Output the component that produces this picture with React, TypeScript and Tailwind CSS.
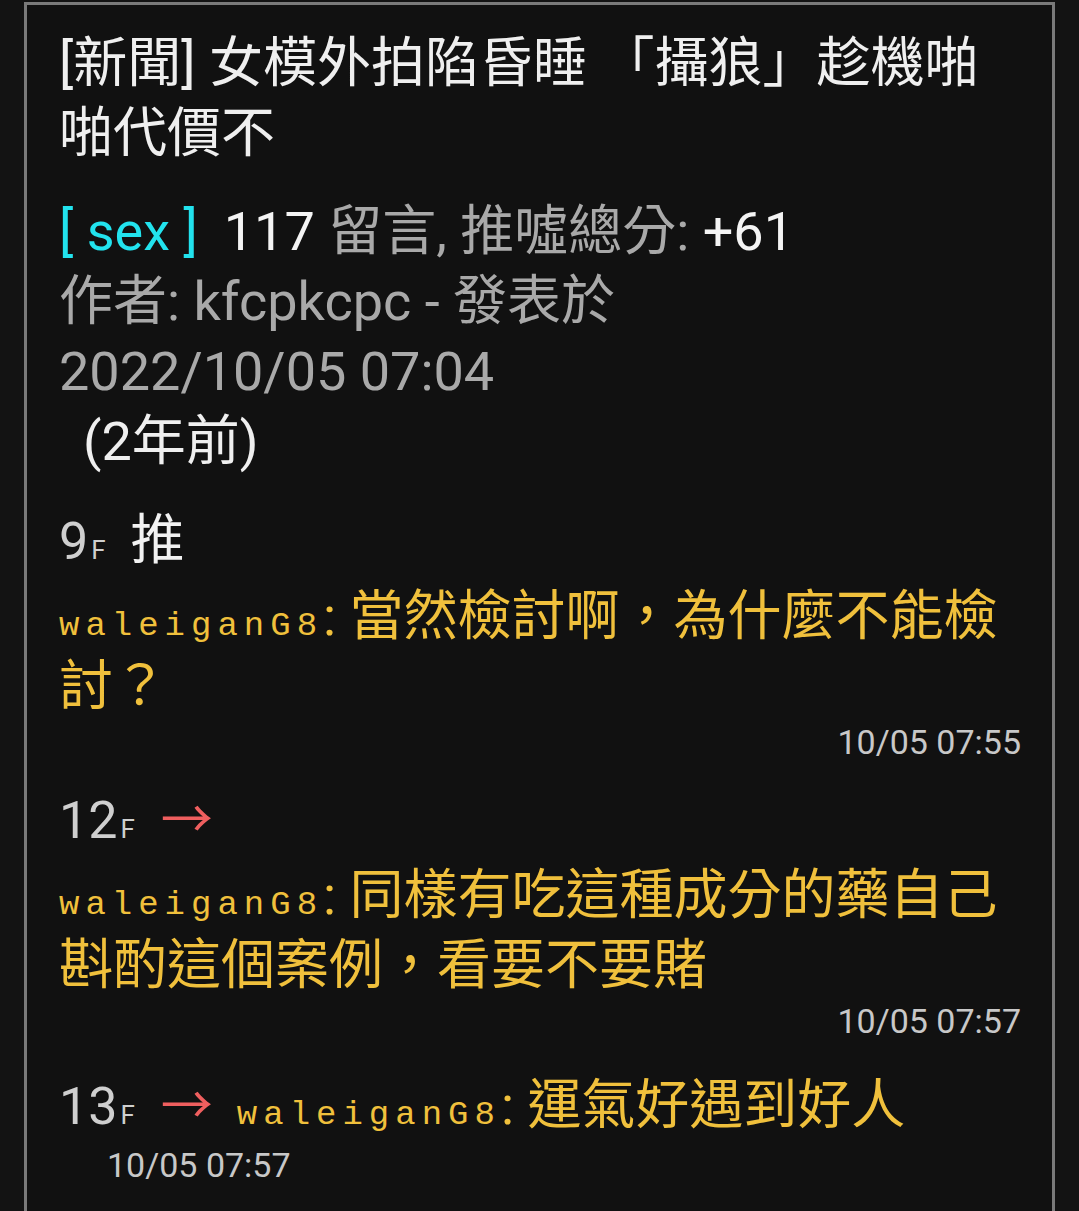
const sans = "font-['Roboto','Noto_Sans_CJK_TC',sans-serif]";
const mono = "font-['Liberation_Mono',monospace]";

type Push = { floor: number; tag: "推" | "→"; user: string; text: string; time: string; inline?: boolean };

const pushes: Push[] = [
  { floor: 9, tag: "推", user: "waleiganG8", text: "當然檢討啊，為什麼不能檢討？", time: "10/05 07:55" },
  { floor: 12, tag: "→", user: "waleiganG8", text: "同樣有吃這種成分的藥自己斟酌這個案例，看要不要賭", time: "10/05 07:57" },
  { floor: 13, tag: "→", user: "waleiganG8", text: "運氣好遇到好人", time: "10/05 07:57", inline: true },
];

function Tag({ tag }: { tag: Push["tag"] }) {
  if (tag === "推") return <span className="ml-[25px] text-[#f2f2f2]">推</span>;
  return (
    <span className="ml-[26px] font-['Noto_Sans_CJK_TC',sans-serif] text-[52px] leading-none text-[#ef5f5f]">→</span>
  );
}

function Floor({ n }: { n: number }) {
  return (
    <span className="text-[52px] text-[#cfcfcf]">
      {n}
      <span className="ml-[3px] text-[26px]">F</span>
    </span>
  );
}

function Comment({ user, text }: { user: string; text: string }) {
  return (
    <>
      <span className={`${mono} text-[34px] leading-none tracking-[6px] text-[#f0c03c]`}>{user}</span>
      <span className="text-[#f0c03c]">: {text}</span>
    </>
  );
}

function PushRow({ p }: { p: Push }) {
  if (p.inline) {
    return (
      <div className="mt-[27px]">
        <div className="leading-[70px]">
          <Floor n={p.floor} />
          <Tag tag={p.tag} />
          <span className="ml-[24px]" />
          <Comment user={p.user} text={p.text} />
        </div>
        <div className="-mt-[8px] pl-[48px] text-[34px] leading-[46px] text-[#c8c8c8]">{p.time}</div>
      </div>
    );
  }
  return (
    <div className="mt-[23px] first:mt-[32px]">
      <div className="leading-[63px]">
        <Floor n={p.floor} />
        <Tag tag={p.tag} />
      </div>
      <div className="leading-[70px]">
        <Comment user={p.user} text={p.text} />
      </div>
      <div className="-mt-[3px] text-right text-[34px] leading-[46px] text-[#c8c8c8]">{p.time}</div>
    </div>
  );
}

export default function App() {
  return (
    <div className={`${sans} min-h-[1211px] bg-[#131313] pt-[2px]`}>
      <div className="mx-6 min-h-[1220px] border-[3px] border-[#7a7a7a] bg-[#111111] pl-8 pr-[31px] pt-6 text-[54px]">
        <div className="leading-[70px] text-[#efefef]">
          [新聞] 女模外拍陷昏睡 「攝狼」趁機啪
          <br />
          啪代價不
        </div>

        <div className="mt-[28px] leading-[70px] text-[#a9a9a9]">
          <div>
            <span className="text-[#22e3ee]">[ sex ]</span>
            <span className="ml-[26px] text-[#f4f4f4]">117</span> 留言, 推噓總分:{" "}
            <span className="text-[#f4f4f4]">+61</span>
          </div>
          <div>作者: kfcpkcpc - 發表於</div>
          <div>2022/10/05 07:04</div>
          <div className="pl-6 text-[#efefef]">(2年前)</div>
        </div>

        <div>
          {pushes.map((p) => (
            <PushRow key={p.floor} p={p} />
          ))}
        </div>
      </div>
    </div>
  );
}
